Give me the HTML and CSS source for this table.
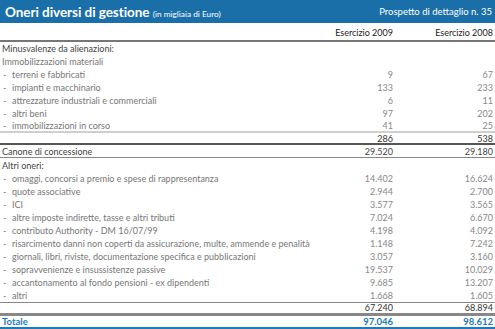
FILE: index.html
```html
<!DOCTYPE html>
<html>
<head>
<meta charset="utf-8">
<link rel="stylesheet" href="styles.css">
</head>
<body>
<div class="page">
  <div class="bar">
    <div class="title">Oneri diversi di gestione <span class="unit">(in migliaia di Euro)</span></div>
    <div class="ref">Prospetto di dettaglio n. 35</div>
  </div>
  <div class="row colhead">
    <div class="lbl"></div><div class="num">Esercizio 2009</div><div class="num">Esercizio 2008</div>
  </div>
  <div class="row sec"><div class="lbl">Minusvalenze da alienazioni:</div><div class="num"></div><div class="num"></div></div>
  <div class="row item"><div class="lbl">Immobilizzazioni materiali</div><div class="num"></div><div class="num"></div></div>
  <div class="row item"><div class="lbl"><span class="dash">-</span>terreni e fabbricati</div><div class="num">9</div><div class="num">67</div></div>
  <div class="row item"><div class="lbl"><span class="dash">-</span>impianti e macchinario</div><div class="num">133</div><div class="num">233</div></div>
  <div class="row item"><div class="lbl"><span class="dash">-</span>attrezzature industriali e commerciali</div><div class="num">6</div><div class="num">11</div></div>
  <div class="row item"><div class="lbl"><span class="dash">-</span>altri beni</div><div class="num">97</div><div class="num">202</div></div>
  <div class="row item last-light"><div class="lbl"><span class="dash">-</span>immobilizzazioni in corso</div><div class="num">41</div><div class="num">25</div></div>
  <div class="row sub sub-dark"><div class="lbl"></div><div class="num">286</div><div class="num">538</div></div>
  <div class="row sec canone"><div class="lbl">Canone di concessione</div><div class="num">29.520</div><div class="num">29.180</div></div>
  <div class="row sec altri"><div class="lbl">Altri oneri:</div><div class="num"></div><div class="num"></div></div>
  <div class="row item"><div class="lbl"><span class="dash">-</span>omaggi, concorsi a premio e spese di rappresentanza</div><div class="num">14.402</div><div class="num">16.624</div></div>
  <div class="row item"><div class="lbl"><span class="dash">-</span>quote associative</div><div class="num">2.944</div><div class="num">2.700</div></div>
  <div class="row item"><div class="lbl"><span class="dash">-</span>ICI</div><div class="num">3.577</div><div class="num">3.565</div></div>
  <div class="row item"><div class="lbl"><span class="dash">-</span>altre imposte indirette, tasse e altri tributi</div><div class="num">7.024</div><div class="num">6.670</div></div>
  <div class="row item"><div class="lbl"><span class="dash">-</span>contributo Authority - DM 16/07/99</div><div class="num">4.198</div><div class="num">4.092</div></div>
  <div class="row item"><div class="lbl"><span class="dash">-</span>risarcimento danni non coperti da assicurazione, multe, ammende e penalità</div><div class="num">1.148</div><div class="num">7.242</div></div>
  <div class="row item"><div class="lbl"><span class="dash">-</span>giornali, libri, riviste, documentazione specifica e pubblicazioni</div><div class="num">3.057</div><div class="num">3.160</div></div>
  <div class="row item"><div class="lbl"><span class="dash">-</span>sopravvenienze e insussistenze passive</div><div class="num">19.537</div><div class="num">10.029</div></div>
  <div class="row item"><div class="lbl"><span class="dash">-</span>accantonamento al fondo pensioni - ex dipendenti</div><div class="num">9.685</div><div class="num">13.207</div></div>
  <div class="row item last-mid"><div class="lbl"><span class="dash">-</span>altri</div><div class="num">1.668</div><div class="num">1.605</div></div>
  <div class="row sub sub-thick"><div class="lbl"></div><div class="num">67.240</div><div class="num">68.894</div></div>
  <div class="row total"><div class="lbl">Totale</div><div class="num">97.046</div><div class="num">98.612</div></div>
</div>
</body>
</html>
```

FILE: styles.css
```css
html, body {
  margin: 0;
  padding: 0;
  background: #fff;
}
body {
  font-family: Lato, "Open Sans", sans-serif;
  font-size: 9px;
  color: #6a6a6a;
}
.page {
  width: 495px;
  height: 329px;
  overflow: hidden;
}
.bar {
  height: 23px;
  background: #1b6fa9;
  color: #fff;
  display: flex;
  align-items: center;
  justify-content: space-between;
  padding: 0 3px 0 5px;
}
.title {
  font-size: 13.5px;
  font-weight: 700;
  letter-spacing: -0.05px;
}
.unit {
  font-size: 8.3px;
  font-weight: 400;
  letter-spacing: 0;
}
.ref {
  font-size: 9.5px;
}
.row {
  display: grid;
  grid-template-columns: minmax(0, 1fr) 100px 100px;
  padding: 0 2px 0 2px;
  align-items: center;
  height: 13px;
  line-height: 11px;
  white-space: nowrap;
}
.num {
  text-align: right;
}
.colhead {
  height: 16px;
  padding-top: 1px;
  color: #222;
  border-bottom: 2px solid #777;
}
.sec {
  color: #444;
  height: 13px;
}
.dash {
  display: inline-block;
  width: 9px;
  padding-left: 1px;
}
.item {
  color: #777;
}
.item .num {
  color: #888;
}
.last-light {
  height: 11px;
  align-items: start;
  border-bottom: 2px solid #cfcfcf;
}
.sub {
  color: #333;
  height: 10px;
}
.sub-dark {
  border-bottom: 2px solid #555;
}
.canone {
  height: 12px;
  border-bottom: 1px solid #888;
  color: #444;
}
.altri {
  height: 14px;
}
.altri ~ .item {
  height: 13px;
}
.altri ~ .item.last-mid {
  border-bottom: 1px solid #888;
}
.sub-thick {
  height: 10px;
  line-height: 10px;
  border-bottom: 3px solid #888;
}
.total {
  height: 11px;
  line-height: 11px;
  color: #1a7bc0;
  font-weight: 700;
  font-size: 9.5px;
  border-bottom: 2px solid #1a7bc0;
}
```
